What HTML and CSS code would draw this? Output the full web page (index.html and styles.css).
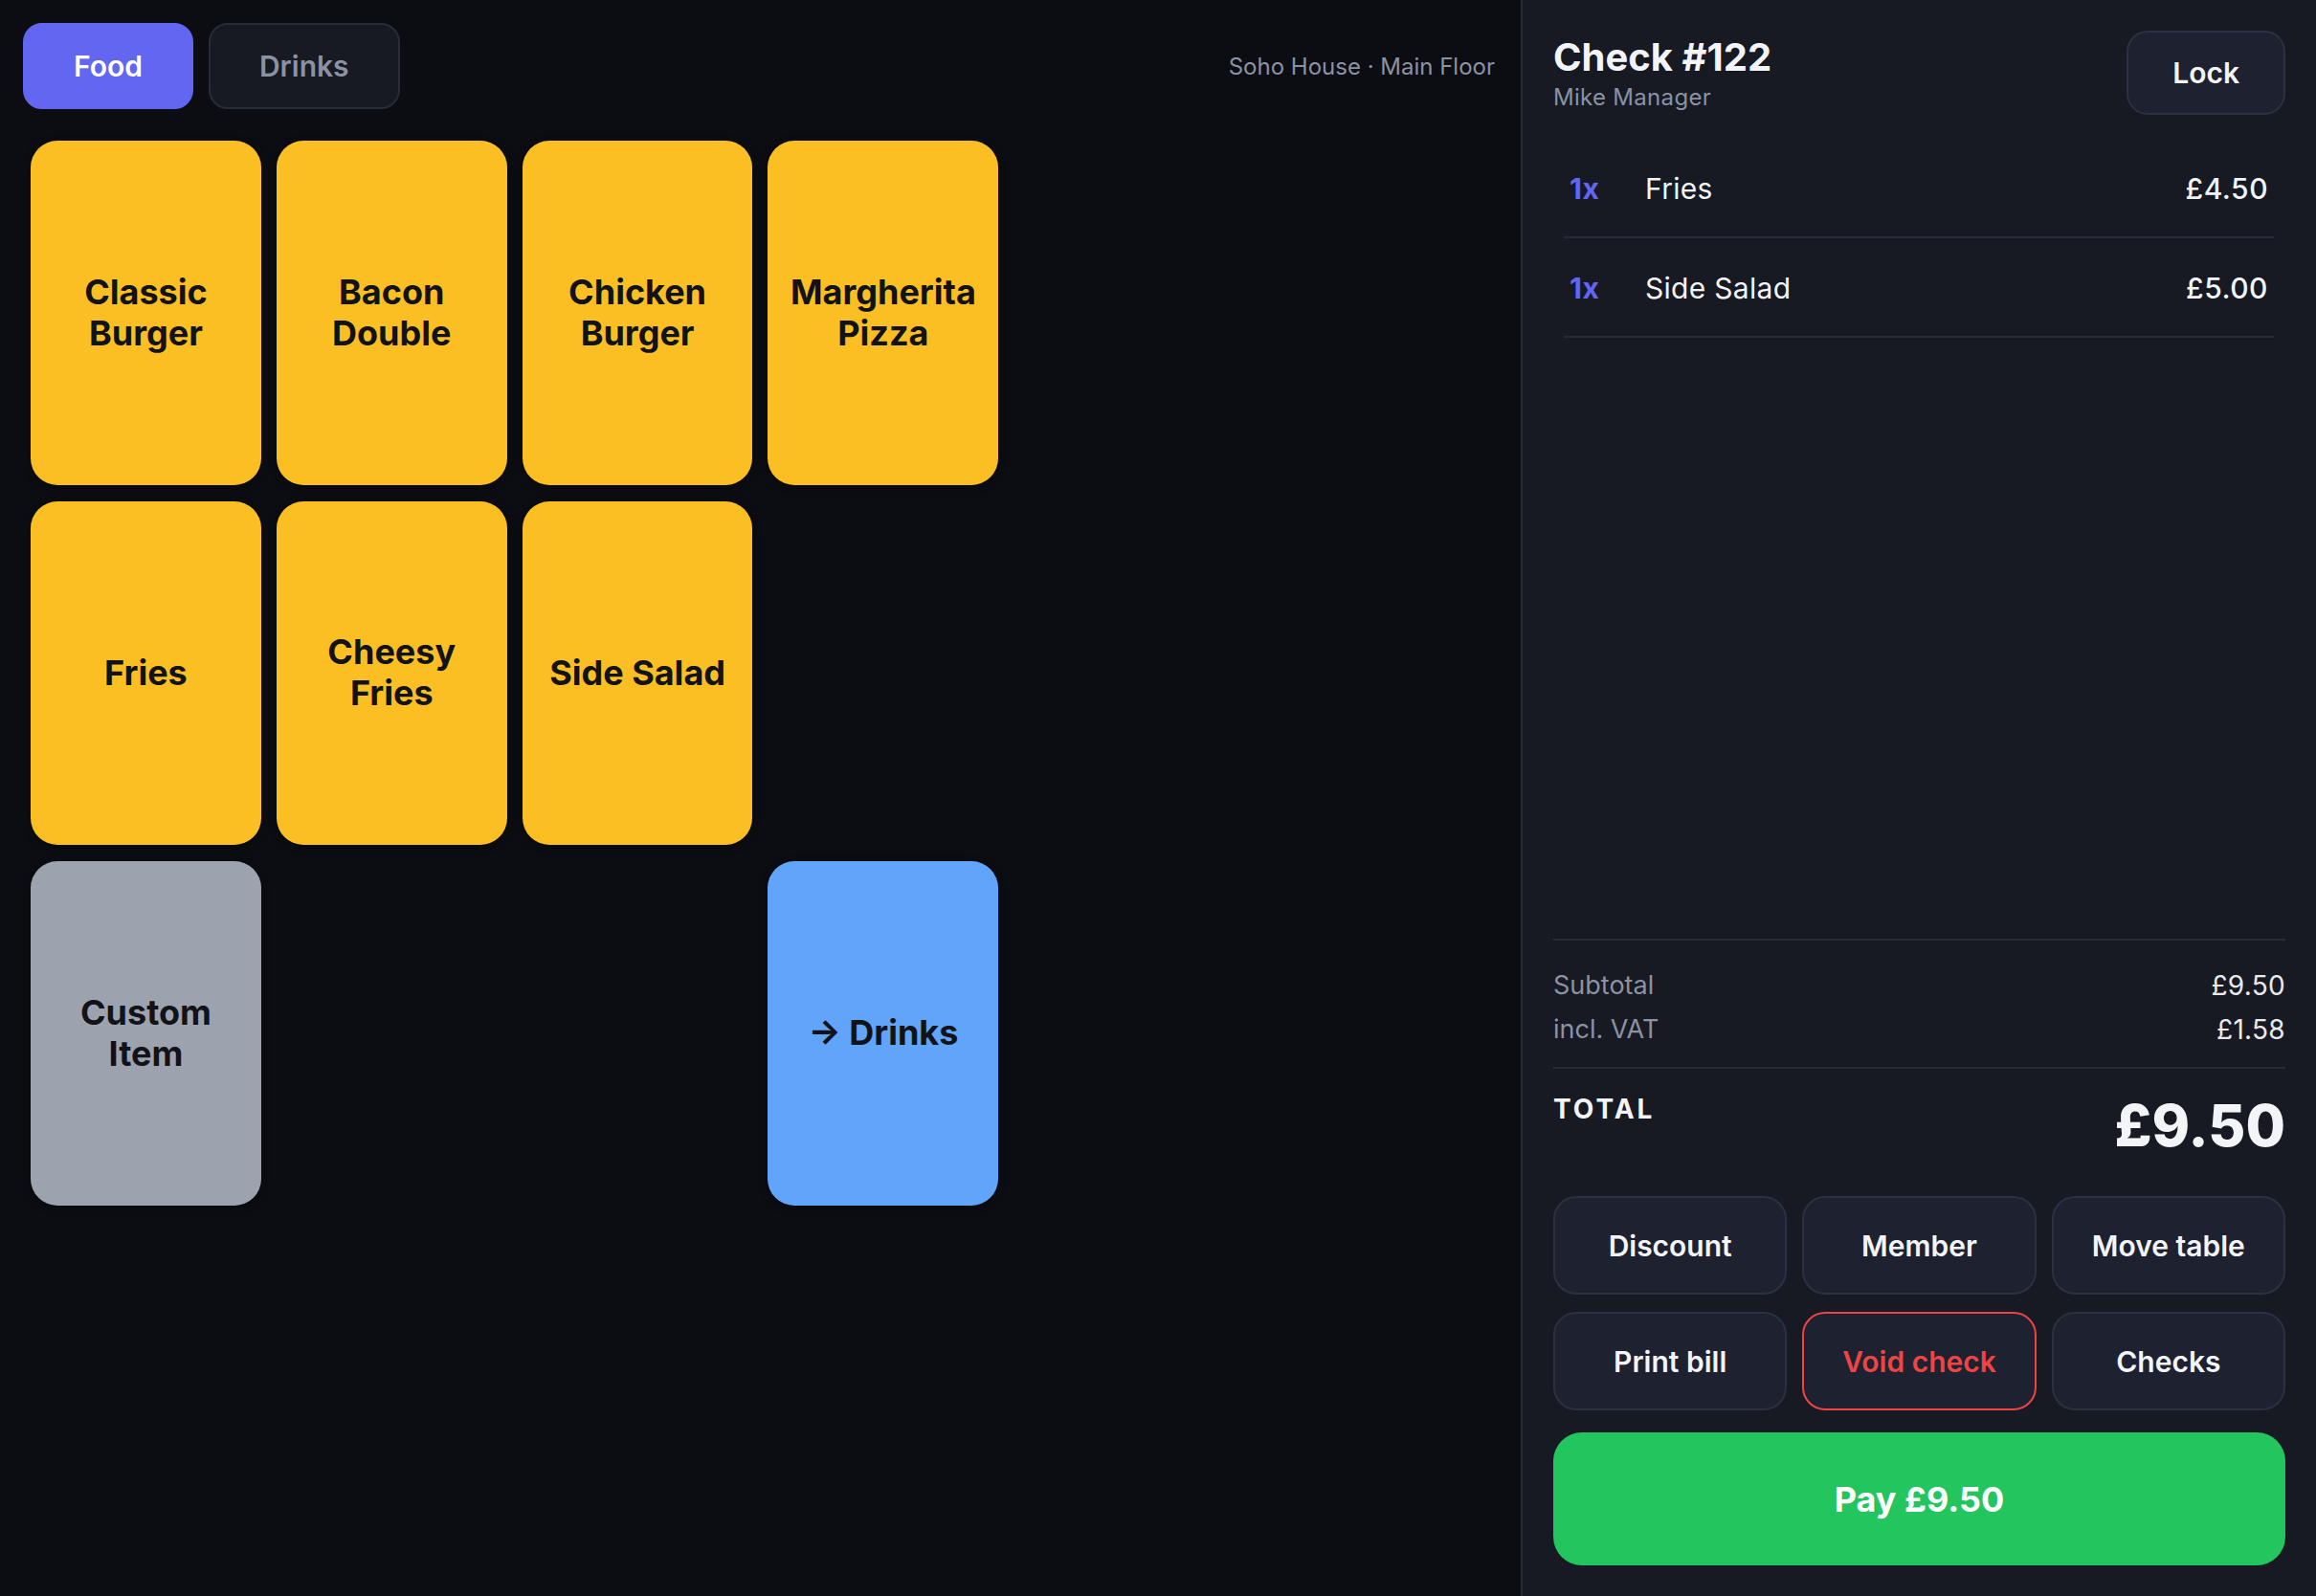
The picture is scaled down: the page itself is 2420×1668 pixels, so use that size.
FILE: index.html
```html
<!DOCTYPE html>
<html>
<head>
<meta charset="utf-8">
<meta name="viewport" content="width=device-width, initial-scale=1.0">
<title>Till – Check #122</title>
<link rel="stylesheet" href="styles.css">
</head>
<body>
<div class="till">
  <main class="menu">
    <div class="menu-bar">
      <div class="tabs">
        <button class="tab tab-active">Food</button>
        <button class="tab">Drinks</button>
      </div>
      <div class="venue">Soho House · Main Floor</div>
    </div>
    <div class="keys">
      <button class="key key-food r1">Classic Burger</button>
      <button class="key key-food r1">Bacon Double</button>
      <button class="key key-food r1">Chicken Burger</button>
      <button class="key key-food r1">Margherita Pizza</button>
      <button class="key key-food r2">Fries</button>
      <button class="key key-food r2">Cheesy Fries</button>
      <button class="key key-food r2">Side Salad</button>
      <button class="key key-custom r3 c1">Custom Item</button>
      <button class="key key-link r3 c4">→ Drinks</button>
    </div>
  </main>

  <aside class="check">
    <header class="check-head">
      <div class="check-info">
        <h1 class="check-title">Check #122</h1>
        <div class="check-staff">Mike Manager</div>
      </div>
      <button class="btn btn-lock">Lock</button>
    </header>

    <ul class="lines">
      <li class="line"><span class="qty">1x</span><span class="name">Fries</span><span class="price">£4.50</span></li>
      <li class="line"><span class="qty">1x</span><span class="name">Side Salad</span><span class="price">£5.00</span></li>
    </ul>

    <div class="sums">
      <div class="sum-row"><span>Subtotal</span><span class="sum-val">£9.50</span></div>
      <div class="sum-row"><span>incl. VAT</span><span class="sum-val">£1.58</span></div>
    </div>

    <div class="total">
      <span class="total-label">TOTAL</span>
      <span class="total-val">£9.50</span>
    </div>

    <div class="actions">
      <button class="btn">Discount</button>
      <button class="btn">Member</button>
      <button class="btn">Move table</button>
      <button class="btn">Print bill</button>
      <button class="btn btn-danger">Void check</button>
      <button class="btn">Checks</button>
    </div>

    <button class="pay">Pay £9.50</button>
  </aside>
</div>
</body>
</html>
```

FILE: styles.css
```css
* { box-sizing: border-box; }
html, body { height: 100%; }
body {
  margin: 0;
  background: #0b0d12;
  color: #f3f4f7;
  font-family: Inter, "Noto Sans", sans-serif;
  -webkit-font-smoothing: antialiased;
}
button {
  font-family: inherit;
  cursor: pointer;
}

.till {
  display: flex;
  height: 100vh;
}

/* left: menu keys */
.menu {
  flex: 1;
  display: flex;
  flex-direction: column;
  min-width: 0;
}
.menu-bar {
  display: flex;
  align-items: center;
  justify-content: space-between;
  padding: 24px 27px 0 24px;
}
.tabs {
  display: flex;
  gap: 16px;
}
.tab {
  height: 90px;
  padding: 0 51px;
  border-radius: 20px;
  border: 2px solid #272c39;
  background: #171a22;
  color: #8b92a3;
  font-size: 30px;
  font-weight: 600;
}
.tab-active {
  background: #6366f1;
  border-color: #6366f1;
  color: #fff;
}
.venue {
  color: #8b92a3;
  font-size: 24px;
}

.keys {
  flex: 1;
  display: grid;
  grid-template-columns: repeat(6, 1fr);
  grid-template-rows: repeat(4, 1fr);
  gap: 17px 16px;
  padding: 33px 32px 32px;
}
.key {
  border: 0;
  border-radius: 28px;
  padding: 0 12px;
  color: #111318;
  font-size: 36px;
  font-weight: 700;
  line-height: 1.2;
  box-shadow: 0 2px 8px rgba(0, 0, 0, .35);
}
.key-food { background: #fbbf24; }
.key-custom { background: #9ca3af; }
.key-link { background: #60a5fa; }
.r1 { grid-row: 1; }
.r2 { grid-row: 2; }
.r3 { grid-row: 3; }
.c1 { grid-column: 1; }
.c4 { grid-column: 4; }

/* right: current check */
.check {
  width: 831px;
  flex-shrink: 0;
  display: flex;
  flex-direction: column;
  background: #171a22;
  border-left: 2px solid #262b37;
  padding: 32px 32px 32px;
}
.check-head {
  display: flex;
  justify-content: space-between;
  align-items: flex-start;
}
.check-info { padding-top: 4px; }
.check-title {
  margin: 0;
  font-size: 40px;
  line-height: 48px;
  font-weight: 700;
}
.check-staff {
  color: #8b92a3;
  font-size: 24px;
  line-height: 36px;
  letter-spacing: 0.3px;
}

.btn {
  background: #1d2130;
  border: 2px solid #2b3142;
  border-radius: 22px;
  color: #f3f4f7;
  font-size: 30px;
  font-weight: 600;
}
.btn-lock {
  height: 88px;
  padding: 0 46px;
}
.btn-danger {
  border-color: #ef4444;
  color: #ef4444;
}

.lines {
  flex: 1;
  list-style: none;
  margin: 25px 12px 0 11px;
  padding: 0;
}
.line {
  display: flex;
  align-items: center;
  height: 104px;
  padding: 2px 6px 0;
  border-bottom: 2px solid #262b37;
  font-size: 30px;
}
.qty {
  width: 79px;
  color: #6366f1;
  font-weight: 700;
  letter-spacing: 0.5px;
}
.name {
  flex: 1;
  letter-spacing: 0.3px;
}
.price {
  font-weight: 500;
  letter-spacing: 0.5px;
}

.sums {
  border-top: 2px solid #262b37;
  border-bottom: 2px solid #262b37;
  padding: 24px 0 16px;
}
.sum-row {
  display: flex;
  justify-content: space-between;
  font-size: 27px;
  line-height: 46px;
  color: #8b92a3;
}
.sum-val {
  color: #e8eaf0;
  font-size: 28px;
  letter-spacing: 0.3px;
}

.total {
  display: flex;
  justify-content: space-between;
  align-items: flex-start;
  padding-top: 25px;
}
.total-label {
  font-size: 28px;
  line-height: 34px;
  font-weight: 700;
  letter-spacing: 3px;
}
.total-val {
  margin-top: 1px;
  font-size: 60px;
  line-height: 67px;
  font-weight: 800;
}

.actions {
  display: grid;
  grid-template-columns: repeat(3, 1fr);
  grid-auto-rows: 103px;
  gap: 18px 16px;
  margin-top: 40px;
}
.actions .btn { border-radius: 24px; }

.pay {
  margin-top: 23px;
  height: 139px;
  border: 0;
  border-radius: 30px;
  background: #22c55e;
  color: #fff;
  font-size: 36px;
  font-weight: 700;
}
```
